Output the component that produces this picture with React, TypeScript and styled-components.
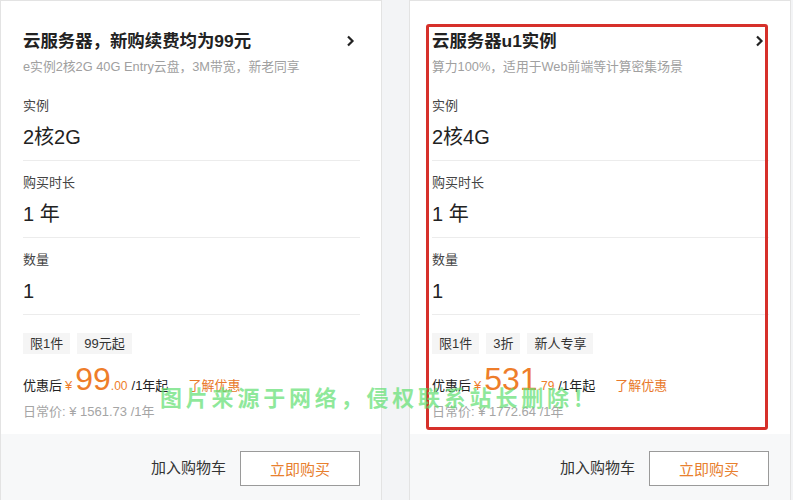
import React from "react";
import styled, { createGlobalStyle } from "styled-components";

const GlobalStyle = createGlobalStyle`
  html, body {
    margin: 0;
    padding: 0;
    background: #f3f4f6;
    font-family: "Liberation Sans", "Noto Sans CJK SC", sans-serif;
    color: #333;
  }
`;

const Page = styled.div`
  position: relative;
  display: flex;
  gap: 27px;
  width: 793px;
  height: 500px;
  overflow: hidden;
`;

const Card = styled.div`
  width: 380px;
  height: 520px;
  flex-shrink: 0;
  background: #fff;
  border: 1px solid #e3e3e3;
  display: flex;
  flex-direction: column;
`;

const Body = styled.div`
  padding: 0 21px 0 22px;
`;

const Header = styled.div`
  padding: 28px 0 8px;
  display: flex;
  flex-direction: column;
  gap: 5px;
`;

const TitleRow = styled.div`
  display: flex;
  align-items: center;
  justify-content: space-between;
  height: 24px;
  padding-right: 5px;
`;

const Title = styled.div`
  font-size: 17.4px;
  font-weight: bold;
  color: #222;
  line-height: 24px;
`;

const Subtitle = styled.div`
  font-size: 12.8px;
  color: #a0a0a0;
  line-height: 18px;
`;

const Section = styled.div`
  padding: 12px 0 9px;
  border-bottom: 1px solid #ececec;
`;

const Label = styled.div`
  font-size: 13px;
  line-height: 20px;
  color: #444;
`;

const Value = styled.div`
  margin-top: 7px;
  font-size: 20px;
  line-height: 28px;
  color: #222;
`;

const Tags = styled.div`
  display: flex;
  gap: 7px;
  margin-top: 18px;
`;

const Tag = styled.span`
  display: inline-block;
  background: #f5f5f5;
  padding: 0 7px;
  height: 21px;
  line-height: 21px;
  font-size: 13px;
  color: #333;
`;

const PriceRow = styled.div`
  display: flex;
  align-items: baseline;
  margin-top: 7px;
  height: 36px;
  font-size: 13px;
  color: #222;
`;

const Yen = styled.span`
  color: #ee7d2a;
  margin: 0 3px 0 3px;
`;

const Big = styled.span`
  color: #ee7d2a;
  font-size: 32px;
  line-height: 36px;
`;

const Cents = styled.span`
  color: #ee7d2a;
  font-size: 12px;
  margin-right: 4px;
`;

const Learn = styled.a`
  color: #e8782a;
  margin-left: 20px;
  text-decoration: none;
`;

const Daily = styled.div`
  font-size: 13px;
  color: #a5a5a5;
  line-height: 18px;
  margin-top: 6px;
`;

const Footer = styled.div`
  margin-top: 13px;
  flex: 1;
  background: #f7f8f9;
  display: flex;
  justify-content: flex-end;
  align-items: flex-start;
  padding: 17px 21px 0 0;
  gap: 14px;
`;

const CartLink = styled.span`
  font-size: 15px;
  line-height: 34px;
  color: #333;
`;

const BuyButton = styled.button`
  width: 120px;
  height: 35px;
  background: #fff;
  border: 1px solid #9a9a9a;
  color: #e8802e;
  font-family: inherit;
  font-size: 15px;
  cursor: pointer;
`;

const Highlight = styled.div`
  position: absolute;
  left: 426px;
  top: 24px;
  width: 336px;
  height: 400px;
  border: 3px solid #d6302a;
  border-radius: 3px;
  pointer-events: none;
`;

const Watermark = styled.div`
  position: absolute;
  left: 160px;
  top: 380px;
  font-size: 22px;
  font-weight: bold;
  letter-spacing: 3.8px;
  color: rgba(100, 224, 116, 0.72);
  white-space: nowrap;
  pointer-events: none;
`;

const Chevron = () => (
  <svg width="9" height="12" viewBox="0 0 9 12">
    <path d="M2 1.5 L6.5 6 L2 10.5" fill="none" stroke="#222" strokeWidth="2.2" />
  </svg>
);

type Offer = {
  title: string;
  subtitle: string;
  spec: string;
  tags: string[];
  price: string;
  cents: string;
  daily: string;
};

const offers: Offer[] = [
  {
    title: "云服务器，新购续费均为99元",
    subtitle: "e实例2核2G 40G Entry云盘，3M带宽，新老同享",
    spec: "2核2G",
    tags: ["限1件", "99元起"],
    price: "99",
    cents: ".00",
    daily: "1561.73",
  },
  {
    title: "云服务器u1实例",
    subtitle: "算力100%，适用于Web前端等计算密集场景",
    spec: "2核4G",
    tags: ["限1件", "3折", "新人专享"],
    price: "531",
    cents: ".79",
    daily: "1772.64",
  },
];

function OfferCard({ offer }: { offer: Offer }) {
  return (
    <Card>
      <Body>
        <Header>
          <TitleRow>
            <Title>{offer.title}</Title>
            <Chevron />
          </TitleRow>
          <Subtitle>{offer.subtitle}</Subtitle>
        </Header>
        <Section>
          <Label>实例</Label>
          <Value>{offer.spec}</Value>
        </Section>
        <Section>
          <Label>购买时长</Label>
          <Value>1 年</Value>
        </Section>
        <Section>
          <Label>数量</Label>
          <Value>1</Value>
        </Section>
        <Tags>
          {offer.tags.map((t) => (
            <Tag key={t}>{t}</Tag>
          ))}
        </Tags>
        <PriceRow>
          优惠后<Yen>¥</Yen>
          <Big>{offer.price}</Big>
          <Cents>{offer.cents}</Cents>/1年起
          <Learn href="#">了解优惠</Learn>
        </PriceRow>
        <Daily>日常价: ¥ {offer.daily} /1年</Daily>
      </Body>
      <Footer>
        <CartLink>加入购物车</CartLink>
        <BuyButton>立即购买</BuyButton>
      </Footer>
    </Card>
  );
}

export default function App() {
  return (
    <>
      <GlobalStyle />
      <Page>
        {offers.map((o) => (
          <OfferCard key={o.title} offer={o} />
        ))}
        <Highlight />
        <Watermark>图片来源于网络，侵权联系站长删除！</Watermark>
      </Page>
    </>
  );
}
